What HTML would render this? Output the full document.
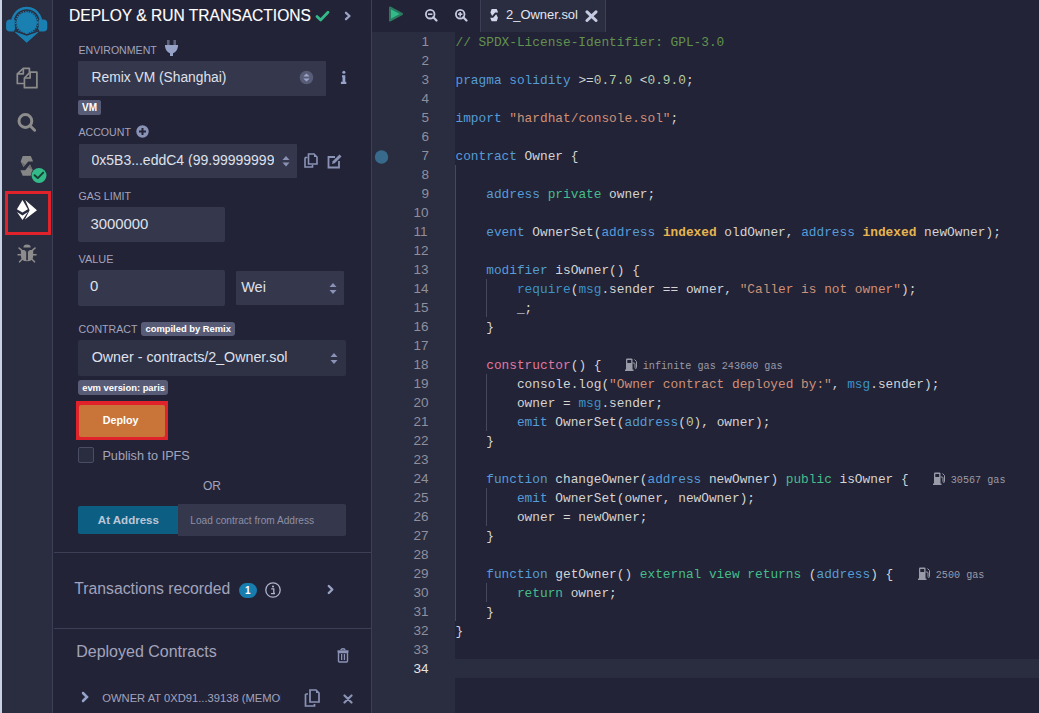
<!DOCTYPE html>
<html><head><meta charset="utf-8"><style>
html,body{margin:0;padding:0;width:1039px;height:713px;overflow:hidden;background:#222336;font-family:'Liberation Sans', sans-serif;}
.r{position:absolute;}
.t{position:absolute;white-space:nowrap;line-height:1;font-family:'Liberation Sans', sans-serif;}
</style></head><body>
<div class="r" style="left:0px;top:0px;width:2px;height:713px;background:#c8d2e3;"></div>
<div class="r" style="left:2px;top:0px;width:50px;height:713px;background:#2a2c3f;"></div>
<div class="r" style="left:52px;top:0px;width:1px;height:713px;background:#3c3f55;"></div>
<svg class="r" style="left:0;top:0" width="53" height="300" viewBox="0 0 53 300">
    <g>
      <path d="M14.3 29.5 A14.3 14.3 0 1 1 39.1 29.5" fill="none" stroke="#1a80b2" stroke-width="2.5"/>
      <path d="M14.8 19.6 H10 Q6.1 19.8 6.1 23.5 V27.8 Q6.1 31.6 10 31.6 H14.8 Z" fill="#1a80b2"/>
      <path d="M38.6 19.6 H43.4 Q47.3 19.8 47.3 23.5 V27.8 Q47.3 31.6 43.4 31.6 H38.6 Z" fill="#1a80b2"/>
      <circle cx="26.7" cy="22.4" r="10.4" fill="#1a80b2"/>
      <circle cx="26.7" cy="22.4" r="11" fill="none" stroke="#1a80b2" stroke-width="1.5" stroke-dasharray="1.25 1.25"/>
      <path d="M16.5 27 L26.7 34.2 L36.9 27 Z" fill="#1a80b2"/>
      <path d="M15.2 30.3 L26.7 34.6 L38.2 30.3 L38.2 32.6 L26.7 42.8 L15.2 32.6 Z" fill="#1a80b2"/>
      <path d="M14.2 30.6 L26.7 35 L39.2 30.6" fill="none" stroke="#2a2c3f" stroke-width="1.5"/>
    </g>
    <g fill="none" stroke="#8c8c8c" stroke-width="1.7" stroke-linejoin="round">
      <path d="M24.2 83.5 H17.3 V73.8 L23.3 68.3 H29.4 V72.5"/>
      <path d="M17.3 73.8 H23.3 V68.3"/>
      <path d="M24.4 78 L30.1 72.2 H36.9 V87.7 H24.4 Z"/>
      <path d="M24.4 78 H30.1 V72.2"/>
    </g>
    <circle cx="25.4" cy="121" r="6.4" fill="none" stroke="#8c8c8c" stroke-width="3"/>
    <path d="M30.6 126.3 L34.6 130.2" stroke="#8c8c8c" stroke-width="3" stroke-linecap="round"/>
    <g fill="#868686">
      <path d="M22.7 155.9 L30.8 155.9 L33.1 161.5 L28.3 161.5 L23.5 167.1 L20.7 161.5 Z"/>
      <path d="M30.8 175.8 L22.7 175.8 L20.4 170.2 L25.2 170.2 L30 164.6 L32.8 170.2 Z"/>
    </g>
    <path d="M20.7 161.5 L23.5 167.1 L25.5 164.8 Z" fill="#6e6e6e"/>
    <path d="M32.8 170.2 L30 164.6 L28 166.9 Z" fill="#6e6e6e"/>
    <circle cx="39" cy="175.5" r="8.2" fill="#2a2c3f"/>
    <circle cx="39" cy="175.5" r="7.5" fill="#32ba89"/>
    <path d="M34.6 175.2 L37.8 178.1 L43.2 172.6" stroke="#173d30" stroke-width="1.9" fill="none" stroke-linecap="round" stroke-linejoin="round"/>
    <g fill="#ffffff">
      <path d="M22.5 200 L27.9 209.2 L22.5 212.5 L16.9 209.2 Z"/>
      <path d="M17 212.1 L22.5 215.5 L27.9 212.1 L22.5 220 Z"/>
      <path d="M25.2 200.1 L37 210.2 L24.9 219.6 L29.6 210.2 Z"/>
    </g>
    <path d="M23.4 247.6 A3.65 3 0 0 1 30.7 247.6 Z" fill="#8c8c8c"/>
    <path d="M20.9 250.1 H33.2 V256 Q33.2 261.3 27 261.3 Q20.9 261.3 20.9 256 Z" fill="#8c8c8c"/>
    <path d="M26.2 250.6 H27.9 V260.3 H26.2 Z" fill="#2a2c3f"/>
    <path d="M24.8 250.1 H29.3 V251.2 H24.8 Z" fill="#2a2c3f"/>
    <g stroke="#8c8c8c" stroke-width="1.6" stroke-linecap="round">
      <path d="M19.1 248.1 L21.6 250.1"/><path d="M35 248.1 L32.5 250.1"/>
      <path d="M18.1 254.7 H21"/><path d="M36 254.7 H33.1"/>
      <path d="M19.6 261.8 L22.1 259.2"/><path d="M34.5 261.8 L32 259.2"/>
    </g>
    </svg>
<div class="r" style="left:5px;top:191px;width:46px;height:43.5px;background:transparent;box-sizing:border-box;border:3.2px solid #e0232b;"></div>
<div class="r" style="left:53px;top:0px;width:318px;height:713px;background:#222336;"></div>
<div class="r" style="left:371px;top:0px;width:1px;height:713px;background:#3c3f55;"></div>
<div class="t" style="left:69.3px;top:8.36px;font-size:16.7px;color:#ffffff;transform:scaleX(0.934);transform-origin:0 0;-webkit-text-stroke:0.15px #fff;">DEPLOY &amp; RUN TRANSACTIONS</div>
<svg class="r" style="left:315px;top:10px" width="15" height="12" viewBox="0 0 15 12"><path d="M2 6.5 L5.6 9.9 L13 2.3" stroke="#32ba89" stroke-width="2.8" fill="none" stroke-linecap="round" stroke-linejoin="round"/></svg>
<svg class="r" style="left:344px;top:11px" width="8" height="10" viewBox="0 0 8 10"><path d="M2 1.8 L5.5 5 L2 8.2" stroke="#9aa3c6" stroke-width="2.3" fill="none" stroke-linecap="round" stroke-linejoin="round"/></svg>
<div class="t" style="left:78.5px;top:45.23px;font-size:10.6px;color:#a2a3bd;">ENVIRONMENT</div>
<svg class="r" style="left:164px;top:39px" width="15" height="18" viewBox="0 0 15 18"><rect x="3" y="1" width="2.6" height="6" fill="#5e6380"/><rect x="9.4" y="1" width="2.6" height="6" fill="#5e6380"/><path d="M1 6 H14 V7.5 Q13.2 12.5 9 14.2 V17 H6 V14.2 Q1.8 12.5 1 7.5 Z" fill="#97a2c8"/></svg>
<div class="r" style="left:78px;top:61px;width:248px;height:35px;background:#35384c;border-radius:1px;"></div>
<div class="t" style="left:91.5px;top:71.32px;font-size:13.8px;color:#dfe0ea;">Remix VM (Shanghai)</div>
<svg class="r" style="left:299px;top:70px" width="15" height="15" viewBox="0 0 15 15"><circle cx="7.5" cy="7.5" r="6.8" fill="#595c76"/><path d="M4.3 6.6 L7.5 3.6 L10.7 6.6 Z M4.3 8.4 L7.5 11.4 L10.7 8.4 Z" fill="#9aa5cc"/></svg>
<svg class="r" style="left:339px;top:69px" width="9" height="16" viewBox="0 0 9 16"><circle cx="4.9" cy="3.2" r="1.55" fill="#97a2c8"/><path d="M3 6.2 H6.3 V12.8 H7.3 V15 H1.9 V12.8 H3.5 V8.2 H3 Z" fill="#97a2c8"/></svg>
<div class="r" style="left:78px;top:100px;width:23px;height:15px;background:#595c76;border-radius:2px;"></div>
<div class="t" style="left:82px;top:103.03px;font-size:10px;color:#ffffff;font-weight:700;">VM</div>
<div class="t" style="left:78.5px;top:127.03px;font-size:10.6px;color:#a2a3bd;">ACCOUNT</div>
<svg class="r" style="left:136px;top:125px" width="13" height="13" viewBox="0 0 13 13"><circle cx="6.5" cy="6.5" r="6.2" fill="#8a93b6"/><path d="M6.5 3 V10 M3 6.5 H10" stroke="#222336" stroke-width="2"/></svg>
<div class="r" style="left:79px;top:144px;width:218px;height:34px;background:#35384c;border-radius:1px;"></div>
<div class="t" style="left:91.5px;top:153.05px;font-size:14px;color:#dfe0ea;width:182px;overflow:hidden;">0x5B3...eddC4 (99.99999999999999 ether)</div>
<svg class="r" style="left:282px;top:155px" width="8" height="13" viewBox="0 0 8 13"><path d="M0.5 5 L4 1 L7.5 5 Z M0.5 7.5 L4 11.5 L7.5 7.5 Z" fill="#8a93b6"/></svg>
<svg class="r" style="left:304px;top:153px" width="14" height="15" viewBox="0 0 14 15"><path d="M4.5 1 H10 L13 4 V11 H4.5 Z" fill="none" stroke="#8a93b6" stroke-width="1.6"/><path d="M10 1 V4 H13" fill="#8a93b6"/><path d="M1 4.5 H3.5 M1 4.5 V14 H8.5 V12" fill="none" stroke="#8a93b6" stroke-width="1.6"/></svg>
<svg class="r" style="left:327px;top:154px" width="16" height="15" viewBox="0 0 16 15"><path d="M8 3 H1.5 V13.5 H12 V7" fill="none" stroke="#8a93b6" stroke-width="1.8"/><path d="M5 10 L5.7 7.3 L12.5 0.5 L14.5 2.5 L7.7 9.3 Z" fill="#8a93b6"/></svg>
<div class="t" style="left:78.5px;top:191.03px;font-size:10.6px;color:#a2a3bd;">GAS LIMIT</div>
<div class="r" style="left:78px;top:207px;width:147px;height:35px;background:#35384c;border-radius:2px;"></div>
<div class="t" style="left:90.4px;top:216.59px;font-size:14.9px;color:#dfe0ea;">3000000</div>
<div class="t" style="left:78.5px;top:254.27px;font-size:10.9px;color:#a2a3bd;">VALUE</div>
<div class="r" style="left:78px;top:270px;width:147px;height:36px;background:#35384c;border-radius:2px;"></div>
<div class="t" style="left:90px;top:279.39px;font-size:14.9px;color:#dfe0ea;">0</div>
<div class="r" style="left:236px;top:271px;width:108px;height:34px;background:#35384c;border-radius:1px;"></div>
<div class="t" style="left:241.2px;top:279.73px;font-size:14.5px;color:#dfe0ea;">Wei</div>
<svg class="r" style="left:329px;top:282px" width="8" height="13" viewBox="0 0 8 13"><path d="M0.5 5 L4 1 L7.5 5 Z M0.5 8 L4 12 L7.5 8 Z" fill="#8a93b6"/></svg>
<div class="t" style="left:78.5px;top:324.23px;font-size:10.6px;color:#a2a3bd;">CONTRACT</div>
<div class="r" style="left:141px;top:322px;width:94px;height:14px;background:#595c76;border-radius:3px;"></div>
<div class="t" style="left:145.5px;top:323.84px;font-size:9.4px;color:#ffffff;font-weight:700;">compiled by Remix</div>
<div class="r" style="left:78px;top:340px;width:268px;height:36px;background:#2f3145;border-radius:2px;"></div>
<div class="t" style="left:91.7px;top:350.01px;font-size:14.28px;color:#dfe0ea;">Owner - contracts/2_Owner.sol</div>
<svg class="r" style="left:330px;top:352px" width="8" height="13" viewBox="0 0 8 13"><path d="M0.5 5 L4 1 L7.5 5 Z M0.5 8 L4 12 L7.5 8 Z" fill="#8a93b6"/></svg>
<div class="r" style="left:78px;top:380px;width:90px;height:15px;background:#595c76;border-radius:3px;"></div>
<div class="t" style="left:82.2px;top:383.24px;font-size:9.4px;color:#ffffff;font-weight:700;">evm version: paris</div>
<div class="r" style="left:76px;top:401px;width:92px;height:39px;background:#e0232b;"></div>
<div class="r" style="left:79px;top:404.5px;width:85.5px;height:32.5px;background:#c97539;border-radius:2px;"></div>
<div class="t" style="left:102.8px;top:415.21px;font-size:10.74px;color:#ffffff;font-weight:700;">Deploy</div>
<div class="r" style="left:78px;top:447px;width:16px;height:16px;background:#2a2c3f;box-sizing:border-box;border:1px solid #4a4d63;border-radius:2px;"></div>
<div class="t" style="left:102.4px;top:449.65px;font-size:12.7px;color:#a2a3bd;">Publish to IPFS</div>
<div class="t" style="left:203px;top:479.64px;font-size:12px;color:#a2a3bd;">OR</div>
<div class="r" style="left:78px;top:506px;width:101px;height:28px;background:#0c5f83;border-radius:2px 0 0 2px;"></div>
<div class="t" style="left:97.8px;top:515.02px;font-size:11.55px;color:#bdc6d6;font-weight:700;">At Address</div>
<div class="r" style="left:178px;top:504px;width:168px;height:32px;background:#35384c;border-radius:0 2px 2px 0;"></div>
<div class="t" style="left:190.3px;top:515.62px;font-size:10.14px;color:#8d8fa6;">Load contract from Address</div>
<div class="r" style="left:54px;top:552px;width:317px;height:1px;background:#3c3f55;"></div>
<div class="t" style="left:74.3px;top:580.68px;font-size:15.74px;color:#a2a3bd;">Transactions recorded</div>
<div class="r" style="left:239px;top:583px;width:18px;height:15px;background:#177cae;border-radius:8px;"></div>
<div class="t" style="left:245px;top:586.03px;font-size:10px;color:#ffffff;font-weight:700;">1</div>
<svg class="r" style="left:265px;top:582px" width="16" height="16" viewBox="0 0 16 16"><circle cx="8" cy="8" r="7.2" fill="none" stroke="#b0b3cc" stroke-width="1.3"/><circle cx="8" cy="4.5" r="1.1" fill="#b0b3cc"/><path d="M6.2 6.9 H8.8 V11.5 H10 M6 11.6 H10" stroke="#b0b3cc" stroke-width="1.3" fill="none"/></svg>
<svg class="r" style="left:326px;top:584px" width="10" height="11" viewBox="0 0 10 11"><path d="M2.8 2 L6.3 5.5 L2.8 9" stroke="#9aa3c6" stroke-width="2.4" fill="none" stroke-linecap="round" stroke-linejoin="round"/></svg>
<div class="r" style="left:54px;top:628px;width:317px;height:1px;background:#3c3f55;"></div>
<div class="t" style="left:76.2px;top:643.56px;font-size:16px;color:#a2a3bd;">Deployed Contracts</div>
<svg class="r" style="left:337px;top:648px" width="12" height="15" viewBox="0 0 12 15"><path d="M4 2 Q4 0.8 6 0.8 Q8 0.8 8 2" fill="none" stroke="#8a93b6" stroke-width="1.4"/><rect x="0.5" y="2.3" width="11" height="2" fill="#8a93b6"/><path d="M1.5 4.5 H10.5 V13 Q10.5 14 9.5 14 H2.5 Q1.5 14 1.5 13 Z" fill="none" stroke="#8a93b6" stroke-width="1.4"/><rect x="4" y="6" width="1.3" height="6" fill="#8a93b6"/><rect x="6.8" y="6" width="1.3" height="6" fill="#8a93b6"/></svg>
<svg class="r" style="left:80px;top:690px" width="10" height="14" viewBox="0 0 10 14"><path d="M3 3 L7 7 L3 11" stroke="#94a3cc" stroke-width="2.5" fill="none" stroke-linecap="round" stroke-linejoin="miter"/></svg>
<div class="t" style="left:102.3px;top:692.52px;font-size:11.2px;color:#a2a3bd;width:178.7px;overflow:hidden;">OWNER AT 0XD91...39138 (MEMORY)</div>
<svg class="r" style="left:304px;top:689px" width="16" height="18" viewBox="0 0 16 18"><path d="M6 1 H12 L15 4 V13 H6 Z" fill="none" stroke="#8a93b6" stroke-width="1.7"/><path d="M12 1 V4 H15" fill="#8a93b6"/><path d="M1.5 5 H4 M1.5 5 V17 H10.5 V15" fill="none" stroke="#8a93b6" stroke-width="1.7"/></svg>
<svg class="r" style="left:343px;top:694px" width="10" height="10" viewBox="0 0 10 10"><path d="M1.5 1.5 L8.5 8.5 M8.5 1.5 L1.5 8.5" stroke="#8a93b6" stroke-width="2.2" stroke-linecap="round"/></svg>
<div class="r" style="left:372px;top:32px;width:83px;height:681px;background:#2a2c3f;"></div>
<div class="r" style="left:455px;top:659px;width:584px;height:19px;background:#2a2c3f;"></div>
<svg class="r" style="left:374px;top:150px" width="15" height="15" viewBox="0 0 15 15"><circle cx="7.5" cy="7" r="6.7" fill="#386a8c"/></svg>
<div class="t" style="left:421.5px;top:35.16px;font-size:13.5px;color:#8f909e;">1</div>
<div class="t" style="left:421.5px;top:54.16px;font-size:13.5px;color:#8f909e;">2</div>
<div class="t" style="left:421.5px;top:73.16px;font-size:13.5px;color:#8f909e;">3</div>
<div class="t" style="left:421.5px;top:92.16px;font-size:13.5px;color:#8f909e;">4</div>
<div class="t" style="left:421.5px;top:111.16px;font-size:13.5px;color:#8f909e;">5</div>
<div class="t" style="left:421.5px;top:130.16px;font-size:13.5px;color:#8f909e;">6</div>
<div class="t" style="left:421.5px;top:149.16px;font-size:13.5px;color:#8f909e;">7</div>
<div class="t" style="left:421.5px;top:168.16px;font-size:13.5px;color:#8f909e;">8</div>
<div class="t" style="left:421.5px;top:187.16px;font-size:13.5px;color:#8f909e;">9</div>
<div class="t" style="left:413.40000000000003px;top:206.16px;font-size:13.5px;color:#8f909e;">10</div>
<div class="t" style="left:413.40000000000003px;top:225.16px;font-size:13.5px;color:#8f909e;">11</div>
<div class="t" style="left:413.40000000000003px;top:244.16px;font-size:13.5px;color:#8f909e;">12</div>
<div class="t" style="left:413.40000000000003px;top:263.16px;font-size:13.5px;color:#8f909e;">13</div>
<div class="t" style="left:413.40000000000003px;top:282.16px;font-size:13.5px;color:#8f909e;">14</div>
<div class="t" style="left:413.40000000000003px;top:301.16px;font-size:13.5px;color:#8f909e;">15</div>
<div class="t" style="left:413.40000000000003px;top:320.16px;font-size:13.5px;color:#8f909e;">16</div>
<div class="t" style="left:413.40000000000003px;top:339.16px;font-size:13.5px;color:#8f909e;">17</div>
<div class="t" style="left:413.40000000000003px;top:358.16px;font-size:13.5px;color:#8f909e;">18</div>
<div class="t" style="left:413.40000000000003px;top:377.16px;font-size:13.5px;color:#8f909e;">19</div>
<div class="t" style="left:413.40000000000003px;top:396.16px;font-size:13.5px;color:#8f909e;">20</div>
<div class="t" style="left:413.40000000000003px;top:415.16px;font-size:13.5px;color:#8f909e;">21</div>
<div class="t" style="left:413.40000000000003px;top:434.16px;font-size:13.5px;color:#8f909e;">22</div>
<div class="t" style="left:413.40000000000003px;top:453.16px;font-size:13.5px;color:#8f909e;">23</div>
<div class="t" style="left:413.40000000000003px;top:472.16px;font-size:13.5px;color:#8f909e;">24</div>
<div class="t" style="left:413.40000000000003px;top:491.16px;font-size:13.5px;color:#8f909e;">25</div>
<div class="t" style="left:413.40000000000003px;top:510.16px;font-size:13.5px;color:#8f909e;">26</div>
<div class="t" style="left:413.40000000000003px;top:529.16px;font-size:13.5px;color:#8f909e;">27</div>
<div class="t" style="left:413.40000000000003px;top:548.16px;font-size:13.5px;color:#8f909e;">28</div>
<div class="t" style="left:413.40000000000003px;top:567.16px;font-size:13.5px;color:#8f909e;">29</div>
<div class="t" style="left:413.40000000000003px;top:586.16px;font-size:13.5px;color:#8f909e;">30</div>
<div class="t" style="left:413.40000000000003px;top:605.16px;font-size:13.5px;color:#8f909e;">31</div>
<div class="t" style="left:413.40000000000003px;top:624.16px;font-size:13.5px;color:#8f909e;">32</div>
<div class="t" style="left:413.40000000000003px;top:643.16px;font-size:13.5px;color:#8f909e;">33</div>
<div class="t" style="left:413.40000000000003px;top:662.16px;font-size:13.5px;color:#e2e2e2;">34</div>
<div class="r" style="left:455px;top:165px;width:1px;height:456px;background:#45475a;"></div>
<div class="r" style="left:486px;top:279px;width:1px;height:38px;background:#45475a;"></div>
<div class="r" style="left:486px;top:374px;width:1px;height:57px;background:#45475a;"></div>
<div class="r" style="left:486px;top:488px;width:1px;height:38px;background:#45475a;"></div>
<div class="r" style="left:486px;top:583px;width:1px;height:19px;background:#45475a;"></div>
<div class="t" style="left:455.5px;top:37.18px;font-size:12.816666666666668px;color:#d4d4d4;font-family:'Liberation Mono', monospace;white-space:pre;"><span style="color:#62924f">// SPDX-License-Identifier: GPL-3.0</span></div>
<div class="t" style="left:455.5px;top:75.18px;font-size:12.816666666666668px;color:#d4d4d4;font-family:'Liberation Mono', monospace;white-space:pre;"><span style="color:#569cd6">pragma</span><span style="color:#d4d4d4"> </span><span style="color:#569cd6">solidity</span><span style="color:#d4d4d4"> &gt;=</span><span style="color:#b5cea8">0.7.0</span><span style="color:#d4d4d4"> &lt;</span><span style="color:#b5cea8">0.9.0</span><span style="color:#d4d4d4">;</span></div>
<div class="t" style="left:455.5px;top:113.18px;font-size:12.816666666666668px;color:#d4d4d4;font-family:'Liberation Mono', monospace;white-space:pre;"><span style="color:#569cd6">import</span><span style="color:#d4d4d4"> </span><span style="color:#ce9178">&quot;hardhat/console.sol&quot;</span><span style="color:#d4d4d4">;</span></div>
<div class="t" style="left:455.5px;top:151.18px;font-size:12.816666666666668px;color:#d4d4d4;font-family:'Liberation Mono', monospace;white-space:pre;"><span style="color:#569cd6">contract</span><span style="color:#d4d4d4"> Owner {</span></div>
<div class="t" style="left:455.5px;top:189.18px;font-size:12.816666666666668px;color:#d4d4d4;font-family:'Liberation Mono', monospace;white-space:pre;"><span style="color:#d4d4d4">    </span><span style="color:#569cd6">address</span><span style="color:#d4d4d4"> </span><span style="color:#46be8c">private</span><span style="color:#d4d4d4"> owner;</span></div>
<div class="t" style="left:455.5px;top:227.18px;font-size:12.816666666666668px;color:#d4d4d4;font-family:'Liberation Mono', monospace;white-space:pre;"><span style="color:#d4d4d4">    </span><span style="color:#569cd6">event</span><span style="color:#d4d4d4"> OwnerSet(</span><span style="color:#569cd6">address</span><span style="color:#d4d4d4"> </span><span style="color:#e6b450;font-weight:700">indexed</span><span style="color:#d4d4d4"> oldOwner, </span><span style="color:#569cd6">address</span><span style="color:#d4d4d4"> </span><span style="color:#e6b450;font-weight:700">indexed</span><span style="color:#d4d4d4"> newOwner);</span></div>
<div class="t" style="left:455.5px;top:265.18px;font-size:12.816666666666668px;color:#d4d4d4;font-family:'Liberation Mono', monospace;white-space:pre;"><span style="color:#d4d4d4">    </span><span style="color:#569cd6">modifier</span><span style="color:#d4d4d4"> isOwner() {</span></div>
<div class="t" style="left:455.5px;top:284.18px;font-size:12.816666666666668px;color:#d4d4d4;font-family:'Liberation Mono', monospace;white-space:pre;"><span style="color:#d4d4d4">        </span><span style="color:#3d92c7">require</span><span style="color:#d4d4d4">(</span><span style="color:#3d92c7">msg</span><span style="color:#d4d4d4">.sender == owner, </span><span style="color:#ce9178">&quot;Caller is not owner&quot;</span><span style="color:#d4d4d4">);</span></div>
<div class="t" style="left:455.5px;top:303.18px;font-size:12.816666666666668px;color:#d4d4d4;font-family:'Liberation Mono', monospace;white-space:pre;"><span style="color:#d4d4d4">        _;</span></div>
<div class="t" style="left:455.5px;top:322.18px;font-size:12.816666666666668px;color:#d4d4d4;font-family:'Liberation Mono', monospace;white-space:pre;"><span style="color:#d4d4d4">    }</span></div>
<div class="t" style="left:455.5px;top:360.18px;font-size:12.816666666666668px;color:#d4d4d4;font-family:'Liberation Mono', monospace;white-space:pre;"><span style="color:#d4d4d4">    </span><span style="color:#e178a0">constructor</span><span style="color:#d4d4d4">() {</span></div>
<div class="t" style="left:455.5px;top:379.18px;font-size:12.816666666666668px;color:#d4d4d4;font-family:'Liberation Mono', monospace;white-space:pre;"><span style="color:#d4d4d4">        console.log(</span><span style="color:#ce9178">&quot;Owner contract deployed by:&quot;</span><span style="color:#d4d4d4">, </span><span style="color:#3d92c7">msg</span><span style="color:#d4d4d4">.sender);</span></div>
<div class="t" style="left:455.5px;top:398.18px;font-size:12.816666666666668px;color:#d4d4d4;font-family:'Liberation Mono', monospace;white-space:pre;"><span style="color:#d4d4d4">        owner = </span><span style="color:#3d92c7">msg</span><span style="color:#d4d4d4">.sender;</span></div>
<div class="t" style="left:455.5px;top:417.18px;font-size:12.816666666666668px;color:#d4d4d4;font-family:'Liberation Mono', monospace;white-space:pre;"><span style="color:#d4d4d4">        </span><span style="color:#569cd6">emit</span><span style="color:#d4d4d4"> OwnerSet(</span><span style="color:#569cd6">address</span><span style="color:#d4d4d4">(</span><span style="color:#b5cea8">0</span><span style="color:#d4d4d4">), owner);</span></div>
<div class="t" style="left:455.5px;top:436.18px;font-size:12.816666666666668px;color:#d4d4d4;font-family:'Liberation Mono', monospace;white-space:pre;"><span style="color:#d4d4d4">    }</span></div>
<div class="t" style="left:455.5px;top:474.18px;font-size:12.816666666666668px;color:#d4d4d4;font-family:'Liberation Mono', monospace;white-space:pre;"><span style="color:#d4d4d4">    </span><span style="color:#569cd6">function</span><span style="color:#d4d4d4"> changeOwner(</span><span style="color:#569cd6">address</span><span style="color:#d4d4d4"> newOwner) </span><span style="color:#46be8c">public</span><span style="color:#d4d4d4"> isOwner {</span></div>
<div class="t" style="left:455.5px;top:493.18px;font-size:12.816666666666668px;color:#d4d4d4;font-family:'Liberation Mono', monospace;white-space:pre;"><span style="color:#d4d4d4">        </span><span style="color:#569cd6">emit</span><span style="color:#d4d4d4"> OwnerSet(owner, newOwner);</span></div>
<div class="t" style="left:455.5px;top:512.18px;font-size:12.816666666666668px;color:#d4d4d4;font-family:'Liberation Mono', monospace;white-space:pre;"><span style="color:#d4d4d4">        owner = newOwner;</span></div>
<div class="t" style="left:455.5px;top:531.18px;font-size:12.816666666666668px;color:#d4d4d4;font-family:'Liberation Mono', monospace;white-space:pre;"><span style="color:#d4d4d4">    }</span></div>
<div class="t" style="left:455.5px;top:569.18px;font-size:12.816666666666668px;color:#d4d4d4;font-family:'Liberation Mono', monospace;white-space:pre;"><span style="color:#d4d4d4">    </span><span style="color:#569cd6">function</span><span style="color:#d4d4d4"> getOwner() </span><span style="color:#46be8c">external</span><span style="color:#d4d4d4"> </span><span style="color:#46be8c">view</span><span style="color:#d4d4d4"> </span><span style="color:#46be8c">returns</span><span style="color:#d4d4d4"> (</span><span style="color:#569cd6">address</span><span style="color:#d4d4d4">) {</span></div>
<div class="t" style="left:455.5px;top:588.18px;font-size:12.816666666666668px;color:#d4d4d4;font-family:'Liberation Mono', monospace;white-space:pre;"><span style="color:#d4d4d4">        </span><span style="color:#46be8c">return</span><span style="color:#d4d4d4"> owner;</span></div>
<div class="t" style="left:455.5px;top:607.18px;font-size:12.816666666666668px;color:#d4d4d4;font-family:'Liberation Mono', monospace;white-space:pre;"><span style="color:#d4d4d4">    }</span></div>
<div class="t" style="left:455.5px;top:626.18px;font-size:12.816666666666668px;color:#d4d4d4;font-family:'Liberation Mono', monospace;white-space:pre;"><span style="color:#d4d4d4">}</span></div>
<svg class="r" style="left:625px;top:358px" width="12" height="13" viewBox="0 0 12 13"><path d="M1 1.5 Q1 0.5 2 0.5 H6.5 Q7.5 0.5 7.5 1.5 V12 H1 Z" fill="#9a9ba8"/><rect x="2.3" y="2" width="3.9" height="3" fill="#222336"/><rect x="0" y="11.5" width="8.5" height="1.5" fill="#9a9ba8"/><path d="M7.5 5 H9 Q10 5 10 6 V9.5 Q10 10.5 10.8 10.5 Q11.5 10.5 11.5 9.5 V3.5 L9.5 1.5" fill="none" stroke="#9a9ba8" stroke-width="1"/></svg>
<div class="t" style="left:642.8px;top:362.24px;font-size:10.13px;color:#9a9ba8;font-family:'Liberation Mono', monospace;">infinite gas 243600 gas</div>
<svg class="r" style="left:933px;top:472px" width="12" height="13" viewBox="0 0 12 13"><path d="M1 1.5 Q1 0.5 2 0.5 H6.5 Q7.5 0.5 7.5 1.5 V12 H1 Z" fill="#9a9ba8"/><rect x="2.3" y="2" width="3.9" height="3" fill="#222336"/><rect x="0" y="11.5" width="8.5" height="1.5" fill="#9a9ba8"/><path d="M7.5 5 H9 Q10 5 10 6 V9.5 Q10 10.5 10.8 10.5 Q11.5 10.5 11.5 9.5 V3.5 L9.5 1.5" fill="none" stroke="#9a9ba8" stroke-width="1"/></svg>
<div class="t" style="left:950.8px;top:476.24px;font-size:10.13px;color:#9a9ba8;font-family:'Liberation Mono', monospace;">30567 gas</div>
<svg class="r" style="left:918px;top:567px" width="12" height="13" viewBox="0 0 12 13"><path d="M1 1.5 Q1 0.5 2 0.5 H6.5 Q7.5 0.5 7.5 1.5 V12 H1 Z" fill="#9a9ba8"/><rect x="2.3" y="2" width="3.9" height="3" fill="#222336"/><rect x="0" y="11.5" width="8.5" height="1.5" fill="#9a9ba8"/><path d="M7.5 5 H9 Q10 5 10 6 V9.5 Q10 10.5 10.8 10.5 Q11.5 10.5 11.5 9.5 V3.5 L9.5 1.5" fill="none" stroke="#9a9ba8" stroke-width="1"/></svg>
<div class="t" style="left:935.8px;top:571.24px;font-size:10.13px;color:#9a9ba8;font-family:'Liberation Mono', monospace;">2500 gas</div>
<svg class="r" style="left:388px;top:5px" width="16" height="18" viewBox="0 0 16 18"><path d="M2 2.5 L14 9 L2 15.5 Z" fill="#32ba89" stroke="#2a7a62" stroke-width="2" stroke-linejoin="round"/></svg>
<svg class="r" style="left:424.5px;top:9px" width="13" height="13" viewBox="0 0 13 13"><circle cx="5.2" cy="5.2" r="4.3" fill="none" stroke="#c6cae0" stroke-width="1.8"/><path d="M8.3 8.3 L11.5 11.5" stroke="#c6cae0" stroke-width="2.2" stroke-linecap="round"/><path d="M3 5.2 H7.4" stroke="#c6cae0" stroke-width="1.6"/></svg>
<svg class="r" style="left:454.5px;top:9px" width="13" height="13" viewBox="0 0 13 13"><circle cx="5.2" cy="5.2" r="4.3" fill="none" stroke="#c6cae0" stroke-width="1.8"/><path d="M8.3 8.3 L11.5 11.5" stroke="#c6cae0" stroke-width="2.2" stroke-linecap="round"/><path d="M3 5.2 H7.4" stroke="#c6cae0" stroke-width="1.6"/><path d="M5.2 3 V7.4" stroke="#c6cae0" stroke-width="1.6"/></svg>
<div class="r" style="left:480px;top:0px;width:126px;height:32px;background:#2a2c3f;box-sizing:border-box;border-left:1px solid #3c3f55;border-right:1px solid #3c3f55;"></div>
<svg class="r" style="left:0;top:0" width="600" height="30" viewBox="0 0 600 30"><g transform="translate(477.45,-88.54) scale(0.625)" fill="#d3d7ec"><path d="M22.7 155.9 L30.8 155.9 L33.1 161.5 L28.3 161.5 L23.5 167.1 L20.7 161.5 Z"/><path d="M30.8 175.8 L22.7 175.8 L20.4 170.2 L25.2 170.2 L30 164.6 L32.8 170.2 Z"/></g></svg>
<div class="t" style="left:506px;top:9.24px;font-size:12.95px;color:#e4e5ee;">2_Owner.sol</div>
<svg class="r" style="left:585px;top:10px" width="13" height="12" viewBox="0 0 13 12"><path d="M2 1.8 L11 10.5 M11 1.8 L2 10.5" stroke="#c6cae0" stroke-width="3" stroke-linecap="round"/></svg>

</body></html>
